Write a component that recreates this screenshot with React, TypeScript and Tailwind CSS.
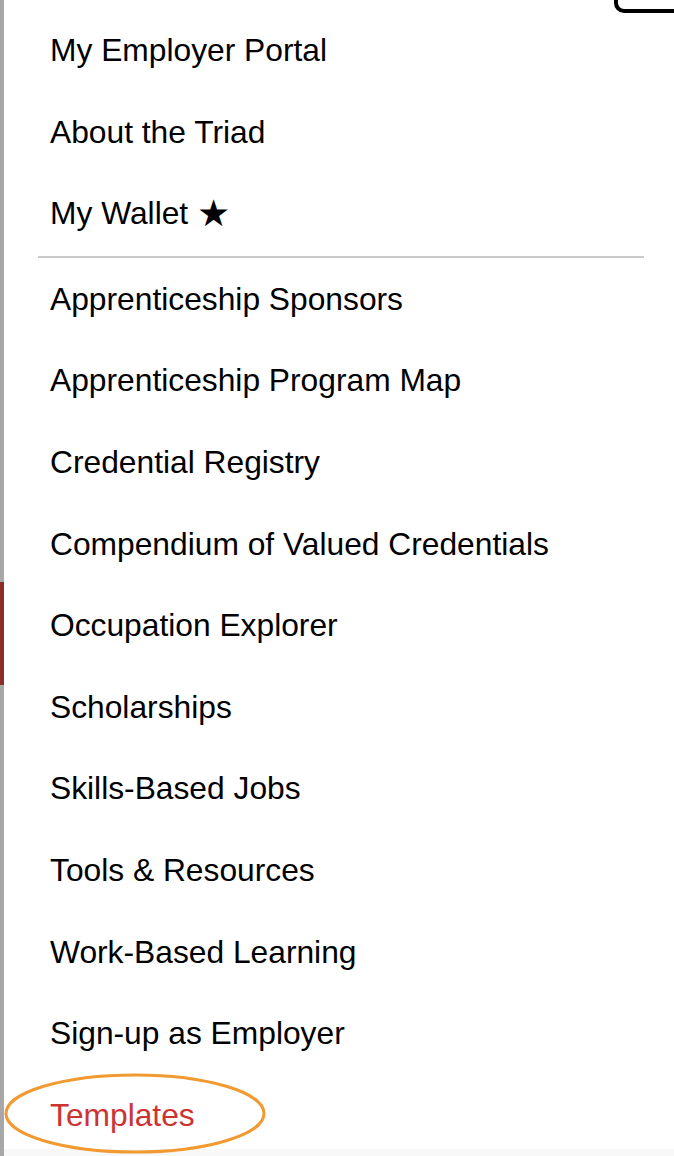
import React from "react";

const top = ["My Employer Portal", "About the Triad"];
const bottom = [
  "Apprenticeship Sponsors",
  "Apprenticeship Program Map",
  "Credential Registry",
  "Compendium of Valued Credentials",
  "Occupation Explorer",
  "Scholarships",
  "Skills-Based Jobs",
  "Tools & Resources",
  "Work-Based Learning",
  "Sign-up as Employer",
];

function Item({ children, className = "" }: { children: React.ReactNode; className?: string }) {
  return (
    <a href="#" className={`flex h-[81.6px] shrink-0 items-center pl-[46px] text-[31.75px] leading-normal text-black ${className}`}>
      {children}
    </a>
  );
}

export default function App() {
  return (
    <div
      className="relative flex h-[1156px] w-[674px] overflow-hidden bg-[linear-gradient(to_bottom,#ffffff_1149px,#f8f8f8_1149px)]"
      style={{ fontFamily: '"Liberation Sans", Arial, Helvetica, sans-serif' }}
    >
      <div className="flex w-[4px] shrink-0 flex-col bg-[#a8a8a8]">
        <div className="mt-[582px] h-[103px] bg-[#8e2b2b]" />
      </div>
      <nav className="flex flex-1 flex-col pt-[10px]">
        {top.map((t) => (
          <Item key={t}>{t}</Item>
        ))}
        <Item>
          My Wallet&nbsp;
          <span style={{ fontFamily: '"DejaVu Sans", sans-serif' }} className="text-[37px] leading-none">
            ★
          </span>
        </Item>
        <div className="mt-[1px] mr-[30px] mb-[1px] ml-[34px] h-[2px] shrink-0 bg-[#cacaca]" />
        {bottom.map((t) => (
          <Item key={t}>{t}</Item>
        ))}
        <Item className="!text-[#cc3333]">Templates</Item>
      </nav>
      <div className="absolute top-[-40px] right-[-20px] h-[53px] w-[80px] rounded-[10px] border-4 border-black" />
      <svg className="pointer-events-none absolute left-[4px] top-[1073px]" width="262" height="81" viewBox="0 0 262 81">
        <ellipse cx="131" cy="40.5" rx="129" ry="38.5" fill="none" stroke="#f19a31" strokeWidth="3" />
      </svg>
    </div>
  );
}
